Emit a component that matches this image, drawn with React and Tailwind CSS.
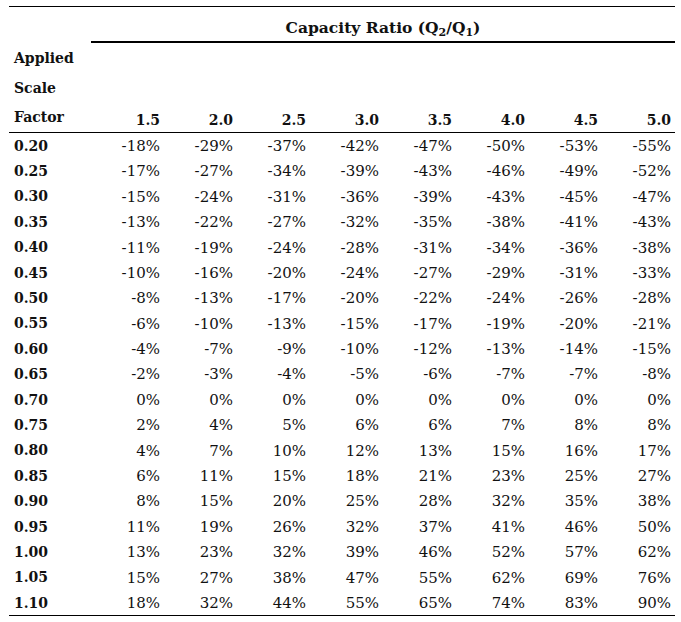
const cols = ["1.5", "2.0", "2.5", "3.0", "3.5", "4.0", "4.5", "5.0"]

const rows = [
  ["0.20", "-18%", "-29%", "-37%", "-42%", "-47%", "-50%", "-53%", "-55%"],
  ["0.25", "-17%", "-27%", "-34%", "-39%", "-43%", "-46%", "-49%", "-52%"],
  ["0.30", "-15%", "-24%", "-31%", "-36%", "-39%", "-43%", "-45%", "-47%"],
  ["0.35", "-13%", "-22%", "-27%", "-32%", "-35%", "-38%", "-41%", "-43%"],
  ["0.40", "-11%", "-19%", "-24%", "-28%", "-31%", "-34%", "-36%", "-38%"],
  ["0.45", "-10%", "-16%", "-20%", "-24%", "-27%", "-29%", "-31%", "-33%"],
  ["0.50", "-8%", "-13%", "-17%", "-20%", "-22%", "-24%", "-26%", "-28%"],
  ["0.55", "-6%", "-10%", "-13%", "-15%", "-17%", "-19%", "-20%", "-21%"],
  ["0.60", "-4%", "-7%", "-9%", "-10%", "-12%", "-13%", "-14%", "-15%"],
  ["0.65", "-2%", "-3%", "-4%", "-5%", "-6%", "-7%", "-7%", "-8%"],
  ["0.70", "0%", "0%", "0%", "0%", "0%", "0%", "0%", "0%"],
  ["0.75", "2%", "4%", "5%", "6%", "6%", "7%", "8%", "8%"],
  ["0.80", "4%", "7%", "10%", "12%", "13%", "15%", "16%", "17%"],
  ["0.85", "6%", "11%", "15%", "18%", "21%", "23%", "25%", "27%"],
  ["0.90", "8%", "15%", "20%", "25%", "28%", "32%", "35%", "38%"],
  ["0.95", "11%", "19%", "26%", "32%", "37%", "41%", "46%", "50%"],
  ["1.00", "13%", "23%", "32%", "39%", "46%", "52%", "57%", "62%"],
  ["1.05", "15%", "27%", "38%", "47%", "55%", "62%", "69%", "76%"],
  ["1.10", "18%", "32%", "44%", "55%", "65%", "74%", "83%", "90%"],
]

export default function App() {
  return (
    <div className="min-h-[622px] bg-white pt-[6px] pl-[9px] text-[#111] font-['DejaVu_Serif','Liberation_Serif',serif] [font-variant-numeric:oldstyle-nums]">
      <div className="w-[666px] border-t border-black">
        {/* title */}
        <div className="grid grid-cols-[82px_1fr]">
          <div />
          <div className="h-[36px] flex items-end justify-center pb-[2px] border-b-[2.5px] border-black text-[15.5px] font-bold">
            <span>
              Capacity Ratio (Q<sub className="text-[11px]">2</sub>/Q<sub className="text-[11px]">1</sub>)
            </span>
          </div>
        </div>

        {/* column header */}
        <div className="border-b border-black text-[14px] font-bold">
          <div className="h-[30px] flex items-center pl-[5px] pt-[1px]">Applied</div>
          <div className="h-[30px] flex items-center pl-[5px] pt-[1px]">Scale</div>
          <div className="h-[29px] grid grid-cols-[82px_repeat(8,73px)] items-center">
            <div className="pl-[5px]">Factor</div>
            {cols.map((c) => (
              <div key={c} className="text-right pr-[4px] pt-[6px]">
                {c}
              </div>
            ))}
          </div>
        </div>

        {/* body */}
        <div className="border-b border-black">
          {rows.map((r) => (
            <div key={r[0]} className="h-[25.4px] grid grid-cols-[82px_repeat(8,73px)] items-center pt-[1px]">
              <div className="pl-[5px] text-[14px] font-bold">{r[0]}</div>
              {r.slice(1).map((v, i) => (
                <div key={i} className="text-right pr-[4px] text-[15px]">
                  {v}
                </div>
              ))}
            </div>
          ))}
        </div>
      </div>
    </div>
  )
}
